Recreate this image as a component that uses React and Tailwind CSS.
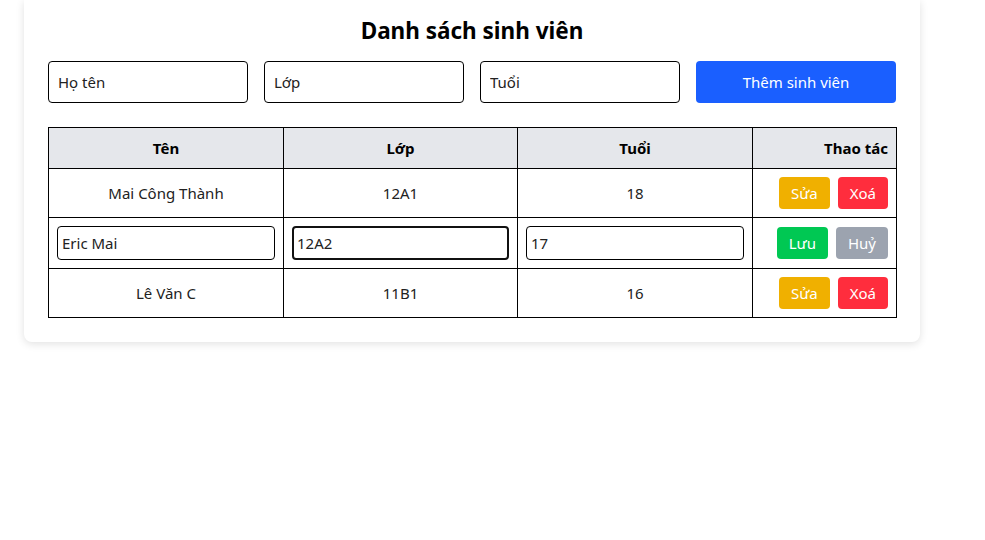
import { useState } from 'react';

const initial = [
  { id: 1, name: 'Mai Công Thành', lop: '12A1', age: 18 },
  { id: 2, name: 'Eric Mai', lop: '12A2', age: 17 },
  { id: 3, name: 'Lê Văn C', lop: '11B1', age: 16 },
];

export default function App() {
  const [students] = useState(initial);
  const [editingId] = useState(2);
  const [name, setName] = useState('');
  const [lop, setLop] = useState('');
  const [age, setAge] = useState('');

  return (
    <div
      className="min-h-screen bg-white text-[#222]"
      style={{ fontFamily: '"Noto Sans", "Open Sans", sans-serif' }}
    >
      <div className="ml-[24px] w-[896px] bg-white rounded-b-lg shadow-[0_2px_8px_rgba(0,0,0,0.12)] px-6 pt-[15px] pb-6">
        {/* Title */}
        <h1 className="text-center text-[22.5px] font-bold text-black leading-8 mb-[14px]">
          Danh sách sinh viên
        </h1>

        {/* Add form */}
        <div className="grid grid-cols-4 gap-4 mb-6">
          <input
            placeholder="Họ tên"
            className="h-[42px] border border-black rounded px-[9px] text-[15px] placeholder:text-[#222] outline-none"
            value={name}
            onChange={(e) => setName(e.target.value)}
          />
          <input
            placeholder="Lớp"
            className="h-[42px] border border-black rounded px-[9px] text-[15px] placeholder:text-[#222] outline-none"
            value={lop}
            onChange={(e) => setLop(e.target.value)}
          />
          <input
            placeholder="Tuổi"
            className="h-[42px] border border-black rounded px-[9px] text-[15px] placeholder:text-[#222] outline-none"
            value={age}
            onChange={(e) => setAge(e.target.value)}
          />
          <button className="h-[42px] bg-[#1a5fff] text-white rounded text-[15px]">
            Thêm sinh viên
          </button>
        </div>

        {/* Table */}
        <table className="w-full table-fixed border-collapse text-[15px]">
          <colgroup>
            <col className="w-[235px]" />
            <col className="w-[234px]" />
            <col className="w-[235px]" />
            <col className="w-[144px]" />
          </colgroup>
          <thead>
            <tr className="bg-[#e5e7eb] h-[41px]">
              <th className="border border-black font-bold text-black">Tên</th>
              <th className="border border-black font-bold text-black">Lớp</th>
              <th className="border border-black font-bold text-black">Tuổi</th>
              <th className="border border-black font-bold text-black text-right px-2">Thao tác</th>
            </tr>
          </thead>
          <tbody>
            {students.map((s) =>
              s.id === editingId ? (
                <tr key={s.id} className="h-[51px]">
                  <td className="border border-black px-2">
                    <input
                      defaultValue={s.name}
                      className="w-full h-[34px] border border-black rounded px-[4px] outline-none"
                    />
                  </td>
                  <td className="border border-black px-2">
                    <input
                      defaultValue={s.lop}
                      className="w-full h-[34px] border-2 border-[#111] rounded px-[3px] outline-none"
                    />
                  </td>
                  <td className="border border-black px-2">
                    <input
                      defaultValue={s.age}
                      className="w-full h-[34px] border border-black rounded px-[4px] outline-none"
                    />
                  </td>
                  <td className="border border-black px-2">
                    <div className="flex justify-end gap-2">
                      <button className="bg-[#00c853] text-white rounded px-3 h-[32px]">Lưu</button>
                      <button className="bg-[#9ca3af] text-white rounded px-3 h-[32px]">Huỷ</button>
                    </div>
                  </td>
                </tr>
              ) : (
                <tr key={s.id} className="h-[49px]">
                  <td className="border border-black text-center">{s.name}</td>
                  <td className="border border-black text-center">{s.lop}</td>
                  <td className="border border-black text-center">{s.age}</td>
                  <td className="border border-black px-2">
                    <div className="flex justify-end gap-2">
                      <button className="bg-[#f0b000] text-white rounded px-3 h-[32px]">Sửa</button>
                      <button className="bg-[#ff2d3d] text-white rounded px-3 h-[32px]">Xoá</button>
                    </div>
                  </td>
                </tr>
              )
            )}
          </tbody>
        </table>
      </div>
    </div>
  );
}
